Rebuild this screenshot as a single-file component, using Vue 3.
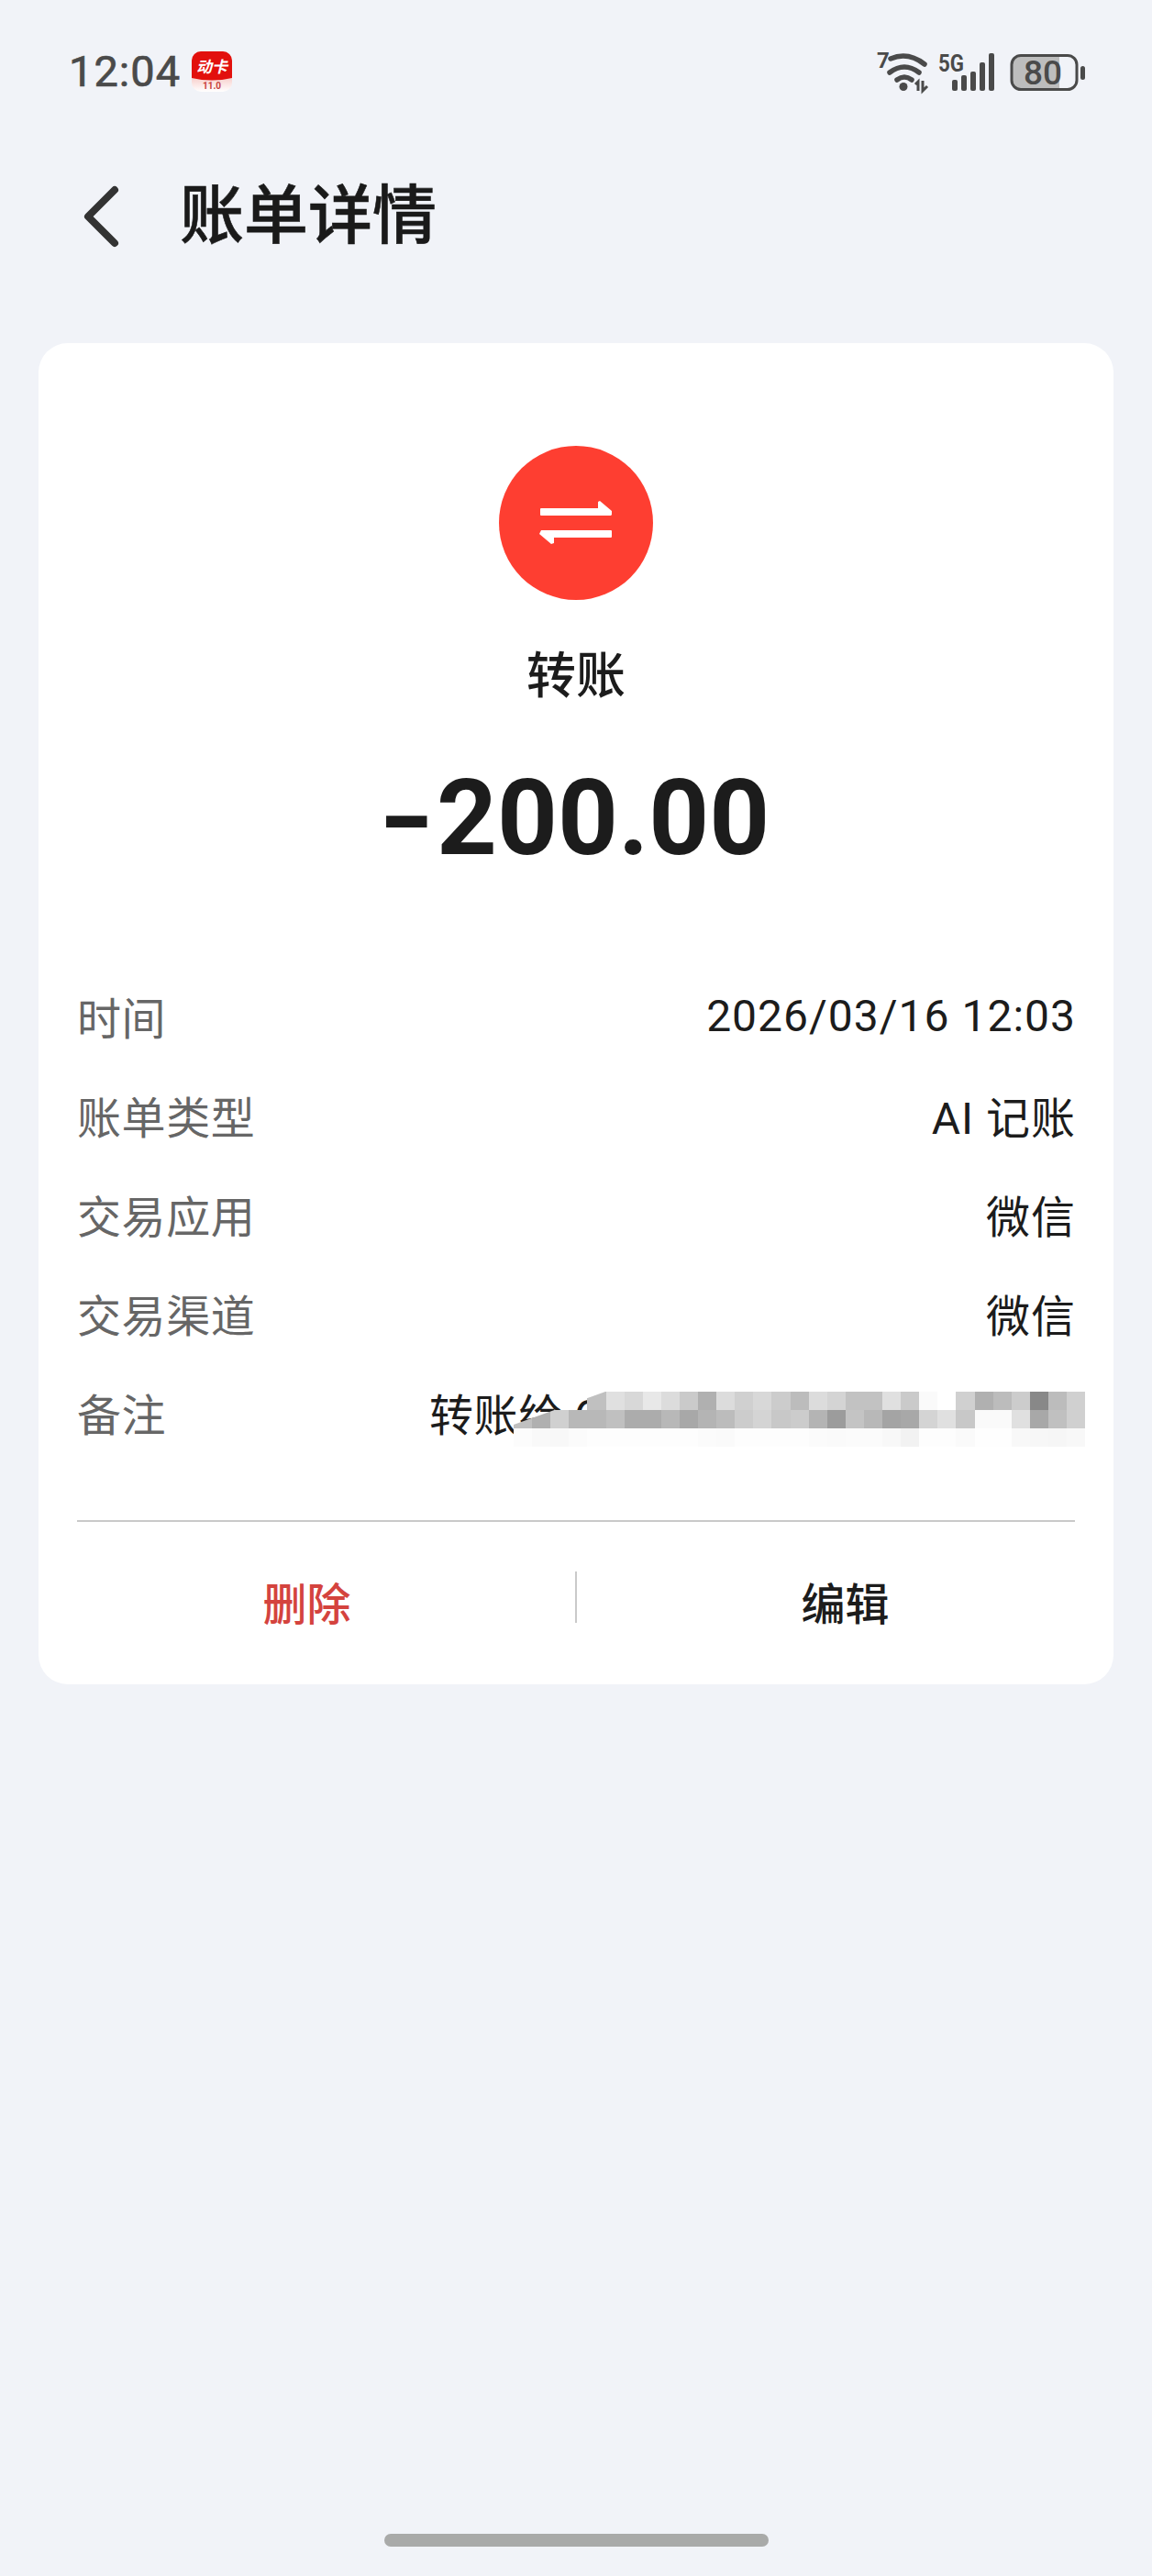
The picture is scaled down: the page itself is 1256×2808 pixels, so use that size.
<script setup>
const rows = [
  { label: '时间', value: '2026/03/16 12:03' },
  { label: '账单类型', value: 'AI 记账' },
  { label: '交易应用', value: '微信' },
  { label: '交易渠道', value: '微信' },
  { label: '备注', value: '转账给 C', note: true }
]
const mosaic = [
  { top: 0, start: 4, cells: ['c0','e0','d8','e8','dc','ca','b0','dc','d0','d8','cc','bc','dc','d4','c2','c2','e0','ca','fa','ff','d0','b0','bc','cc','88','bc','d0'] },
  { top: 20, start: 0, cells: ['c0','b0','d0','b8','b8','c0','ac','ac','b8','a8','b4','bc','cc','d4','c8','cc','b4','9c','c4','b8','a4','a8','d4','e0','c8','fa','fa','e0','a8','c0','d0'] },
  { top: 40, start: 0, cells: ['fc','f9','f8','fb','fd','fd','fd','fd','fd','fd','fb','fa','fd','fd','fd','fd','fb','fa','fb','fb','f8','f2','fd','fd','fa','fe','fe','f8','f7','f6','f8'] }
]
const cellStyle = (row, i, v) => ({
  left: (row.start + i) * 20.1 + 'px',
  top: row.top + 'px',
  background: '#' + v + v + v
})
</script>

<template>
  <div class="page">
    <div class="status">
      <div class="status-left">
        <span class="time">12:04</span>
        <svg class="app-badge" viewBox="0 0 44 44" width="44" height="44">
          <defs>
            <linearGradient id="fade" x1="0" y1="0.6" x2="0" y2="1">
              <stop offset="0" stop-color="#f7c9c5" />
              <stop offset="1" stop-color="#ffffff" />
            </linearGradient>
          </defs>
          <rect width="44" height="44" rx="10" fill="url(#fade)" />
          <path d="M0 10a10 10 0 0 1 10-10h24a10 10 0 0 1 10 10v19q-22 5-44 0z" fill="#e2100d" />
          <text x="22" y="23" class="badge-main">动卡</text>
          <text x="22" y="41" class="badge-sub">11.0</text>
        </svg>
      </div>
      <svg class="status-icons" viewBox="950 50 240 56" width="240" height="56">
        <text x="956" y="74" class="seven">7</text>
        <g fill="none" stroke="#4a4a4a" stroke-linecap="round">
          <path d="M971 64q19-8 37 6" stroke-width="5.5" />
          <path d="M970 79q16-12 32 0" stroke-width="5.5" />
          <path d="M978 87q8-6 16 0" stroke-width="5.5" />
        </g>
        <circle cx="985" cy="94.500" r="4.500" fill="#4a4a4a" />
        <path d="M1001 99V89l-3 3M1006 88v11l5-5" fill="none" stroke="#4a4a4a" stroke-width="3" />
        <text x="1023" y="78" class="five-g" textLength="28" lengthAdjust="spacingAndGlyphs">5G</text>
        <g fill="#4a4a4a">
          <rect x="1038" y="87" width="6" height="12" rx="2" />
          <rect x="1048" y="82" width="6" height="17" rx="2" />
          <rect x="1058" y="78" width="6" height="21" rx="2" />
          <rect x="1068" y="68" width="6" height="31" rx="2" />
          <rect x="1078" y="58" width="6" height="41" rx="2" />
        </g>
        <path d="M1112 61h43v36h-43a9 9 0 0 1-9-9v-18a9 9 0 0 1 9-9z" fill="#bdbdbd" />
        <rect x="1103" y="60.500" width="71" height="37" rx="10" fill="none" stroke="#4a4a4a" stroke-width="3" />
        <rect x="1178" y="72" width="5" height="15" rx="2.500" fill="#4a4a4a" />
        <text x="1137" y="92" class="bat-text">80</text>
      </svg>
    </div>

    <header class="header">
      <svg class="back" viewBox="0 0 44 72" width="44" height="72">
        <path d="M37 7L8 36l29 29" fill="none" stroke="#333333" stroke-width="8" stroke-linecap="round" stroke-linejoin="round" />
      </svg>
      <h1 class="title">账单详情</h1>
    </header>

    <main class="card">
      <div class="hero">
        <svg class="circle" viewBox="0 0 168 168" width="168" height="168">
          <circle cx="84" cy="84" r="84" fill="#fe3e31" />
          <path d="M46 68H108V61L110 60L123 71V75L122 76H46a1 1 0 0 1-1-1V69a1 1 0 0 1 1-1z" fill="#fff" />
          <path d="M122 92a1 1 0 0 1 1 1V99a1 1 0 0 1-1 1H60V106L57 107L44 96L46 92z" fill="#fff" />
        </svg>
        <div class="kind">转账</div>
        <div class="amount"><span class="minus">-</span>200.00</div>
      </div>

      <div class="rows">
        <div v-for="row in rows" :key="row.label" class="row">
          <span class="label">{{ row.label }}</span>
          <span class="value" :class="{ 'value-note': row.note }">{{ row.value }}</span>
          <div v-if="row.note" class="mosaic">
            <template v-for="m in mosaic" :key="m.top">
              <i v-for="(v, i) in m.cells" :key="i" class="cell" :style="cellStyle(m, i, v)"></i>
            </template>
          </div>
        </div>
      </div>

      <div class="actions">
        <button class="action danger">删除</button>
        <span class="sep"></span>
        <button class="action">编辑</button>
      </div>
    </main>

    <div class="home-bar"></div>
  </div>
</template>

<style>
body { margin: 0; background: #f1f3f8; }
</style>

<style scoped>
.page {
  min-height: 2808px;
  box-sizing: border-box;
  display: flex;
  flex-direction: column;
  background: #f1f3f8;
  font-family: Roboto, "Noto Sans CJK SC", sans-serif;
  color: #1c1c1c;
}
.status {
  height: 56px;
  margin-top: 50px;
  display: flex;
  justify-content: space-between;
  align-items: center;
  padding: 0 66px 0 75px;
}
.status-left { display: flex; align-items: center; gap: 12px; }
.time {
  font-size: 47px;
  line-height: 56px;
  font-weight: 400;
  letter-spacing: 1px;
  color: #4a4a4a;
  -webkit-text-stroke: 0.7px #4a4a4a;
}
.app-badge { display: block; }
.badge-main { font: italic 700 17px "Noto Sans CJK SC", sans-serif; fill: #fff; text-anchor: middle; }
.badge-sub { font: 700 10px Roboto, sans-serif; fill: #c8413c; text-anchor: middle; }
.seven { font: 700 24px Roboto, sans-serif; fill: #4a4a4a; }
.five-g { font: 700 26px Roboto, sans-serif; fill: #4a4a4a; }
.bat-text { font: 500 37px Roboto, sans-serif; fill: #4a4a4a; text-anchor: middle; }

.header {
  height: 120px;
  margin-top: 70px;
  display: flex;
  align-items: center;
  padding-left: 88px;
}
.back { display: block; }
.title {
  margin: 0 0 0 64px;
  font-size: 70px;
  line-height: 120px;
  font-weight: 500;
  color: #1a1a1a;
  -webkit-text-stroke: 0.6px #1a1a1a;
}

.card {
  margin: 78px 42px 0;
  height: 1462px;
  box-sizing: border-box;
  padding-top: 112px;
  background: #fff;
  border-radius: 32px;
  display: flex;
  flex-direction: column;
}
.hero { display: flex; flex-direction: column; align-items: center; }
.circle { display: block; }
.kind {
  margin-top: 49px;
  font-size: 54px;
  line-height: 70px;
  font-weight: 500;
}
.amount {
  margin-top: 51px;
  padding-left: 4px;
  font-size: 115px;
  line-height: 136px;
  font-weight: 700;
  color: #1c1c1c;
}
.minus { display: inline-block; transform: scaleX(1.4); margin-right: 10px; }

.rows { margin-top: 93px; padding: 0 42px; }
.row {
  position: relative;
  height: 108px;
  display: flex;
  align-items: center;
  justify-content: space-between;
  font-size: 48px;
}
.label { color: #666; letter-spacing: 0.6px; }
.value { color: #1c1c1c; letter-spacing: 1px; margin-right: -1px; }
.value-note { width: 704px; margin-right: 0; letter-spacing: 0.6px; }
.mosaic {
  position: absolute;
  left: 476px;
  top: 32px;
  width: 624px;
  height: 60px;
  clip-path: polygon(0 36px, 100px 0, 100% 0, 100% 100%, 0 100%);
}
.cell { position: absolute; width: 20.2px; height: 20px; }

.actions {
  margin-top: 64px;
  position: relative;
  height: 176px;
  display: flex;
  align-items: center;
}
.actions::before {
  content: "";
  position: absolute;
  left: 42px;
  right: 42px;
  top: 0;
  height: 2px;
  background: #c9c9c9;
}
.action {
  flex: 1;
  border: 0;
  padding: 0;
  background: none;
  height: 176px;
  font: 500 48px Roboto, "Noto Sans CJK SC", sans-serif;
  color: #1c1c1c;
}
.danger { color: #d4433e; }
.sep { width: 2px; height: 56px; margin-bottom: 8px; background: #cacaca; flex: none; }

.home-bar {
  margin: auto auto 32px;
  width: 419px;
  height: 14px;
  border-radius: 7px;
  background: #a9aaa9;
}
</style>
